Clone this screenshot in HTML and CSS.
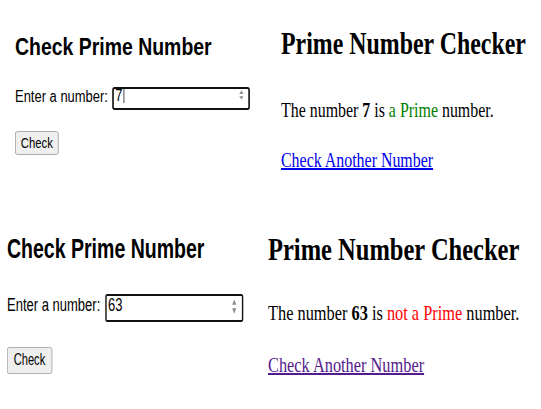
FILE: index.html
```html
<!DOCTYPE html>
<html lang="en">
<head>
<meta charset="utf-8">
<title>Prime Number Checker</title>
<link rel="stylesheet" href="styles.css">
</head>
<body>
<main class="board">
  <section class="cell tl">
    <div class="inner form-panel">
      <h2 class="form-title">Check Prime Number</h2>
      <div class="row">
        <label class="label">Enter a number:</label>
        <div class="field">
          <span class="val">7</span><span class="caret"></span>
          <svg class="spin" viewBox="0 0 8 16" preserveAspectRatio="none" aria-hidden="true"><path d="M1 6.5 L4 2 L7 6.5 Z M1 9.5 L4 14 L7 9.5 Z"/></svg>
        </div>
      </div>
      <button class="btn" type="button">Check</button>
    </div>
  </section>
  <section class="cell tr">
    <div class="inner result-panel">
      <h2 class="res-title">Prime Number Checker</h2>
      <p class="msg">The number <b>7</b> is <span class="yes">a Prime</span> number.</p>
      <p class="again"><a href="#" class="link">Check Another Number</a></p>
    </div>
  </section>
  <section class="cell bl">
    <div class="inner form-panel">
      <h2 class="form-title">Check Prime Number</h2>
      <div class="row">
        <label class="label">Enter a number:</label>
        <div class="field">
          <span class="val">63</span>
          <svg class="spin" viewBox="0 0 8 16" preserveAspectRatio="none" aria-hidden="true"><path d="M1 6.5 L4 2 L7 6.5 Z M1 9.5 L4 14 L7 9.5 Z"/></svg>
        </div>
      </div>
      <button class="btn" type="button">Check</button>
    </div>
  </section>
  <section class="cell br">
    <div class="inner result-panel">
      <h2 class="res-title">Prime Number Checker</h2>
      <p class="msg">The number <b>63</b> is <span class="no">not a Prime</span> number.</p>
      <p class="again"><a href="#" class="link visited">Check Another Number</a></p>
    </div>
  </section>
</main>
</body>
</html>
```
FILE: styles.css
```css
* { box-sizing: border-box; }
html, body { margin: 0; padding: 0; background: #fff; }

.board {
  display: grid;
  grid-template-columns: 260px 281px;
  grid-template-rows: 200px 209px;
  width: 541px;
  height: 409px;
  overflow: hidden;
}
.cell { overflow: hidden; }
.inner { transform-origin: 0 0; width: max-content; white-space: nowrap; }

.form-panel { font-family: "Liberation Sans", Arial, sans-serif; color: #000; }
.result-panel { font-family: "Liberation Serif", "Times New Roman", serif; color: #000; }

h2 { margin: 0; font-weight: 700; }
p { margin: 0; }

.row { display: flex; align-items: flex-start; }
.label { display: block; }
.field {
  position: relative;
  display: flex;
  align-items: flex-start;
  border-style: solid;
  border-color: #111;
  border-radius: 3px;
  padding-left: 2px;
  background: #fff;
}
.caret { width: 1px; height: 14px; background: #222; margin-left: 1px; }
.spin { position: absolute; fill: #8e8e8e; }

.btn {
  display: flex;
  align-items: center;
  justify-content: center;
  padding: 0;
  background: #efefef;
  border-style: solid;
  border-color: #a3a3a3;
  border-radius: 3px;
  font-family: "Liberation Sans", Arial, sans-serif;
  color: #000;
}

.link { color: #0000ee; text-decoration: underline; text-decoration-thickness: 2px; }
.link.visited { color: #551a8b; }
.yes { color: #008000; }
.no { color: #ff0000; }

/* top-left: form */
.tl { padding-left: 15px; }
.tl .inner { transform: scaleX(0.81); }
.tl .form-title { font-size: 24px; line-height: 24px; margin-top: 35px; }
.tl .row { margin-top: 28px; gap: 5px; }
.tl .label { font-size: 16px; line-height: 16px; margin-top: 1.5px; }
.tl .field { width: 170px; height: 23px; border-width: 2px 2.5px; }
.tl .val { font-size: 16px; line-height: 14px; }
.tl .caret { margin-top: 0; }
.tl .spin { right: 5px; top: 0; width: 7px; height: 12px; }
.tl .btn { margin-top: 21px; width: 54px; height: 24px; font-size: 14px; border-width: 1px 1.25px; }

/* top-right: result */
.tr { padding-left: 21px; }
.tr .inner { transform: scaleX(0.758); }
.tr .res-title { font-size: 31.5px; line-height: 32px; margin-top: 28px; }
.tr .msg, .tr .again { font-size: 21px; line-height: 22px; }
.tr .msg { margin-top: 38.5px; }
.tr .again { margin-top: 28px; }

/* bottom-left: form */
.bl { padding-left: 7px; }
.bl .inner { transform: scaleX(0.697); }
.bl .form-title { font-size: 28px; line-height: 28px; margin-top: 34.6px; }
.bl .row { margin-top: 31.4px; gap: 7px; }
.bl .label { font-size: 18.67px; line-height: 19px; margin-top: 1.5px; }
.bl .field { width: 198px; height: 28px; border-width: 2px 2.9px; }
.bl .val { font-size: 18.67px; line-height: 18px; }
.bl .spin { right: 7px; top: 1px; width: 8px; height: 19px; }
.bl .btn { margin-top: 25px; width: 64.5px; height: 27px; font-size: 16px; border-width: 1px 1.45px; }

/* bottom-right: result */
.br { padding-left: 8px; }
.br .inner { transform: scaleX(0.778); }
.br .res-title { font-size: 31.5px; line-height: 31px; margin-top: 34px; }
.br .msg, .br .again { font-size: 21px; line-height: 22px; }
.br .msg { margin-top: 37px; }
.br .again { margin-top: 29.7px; }
```
